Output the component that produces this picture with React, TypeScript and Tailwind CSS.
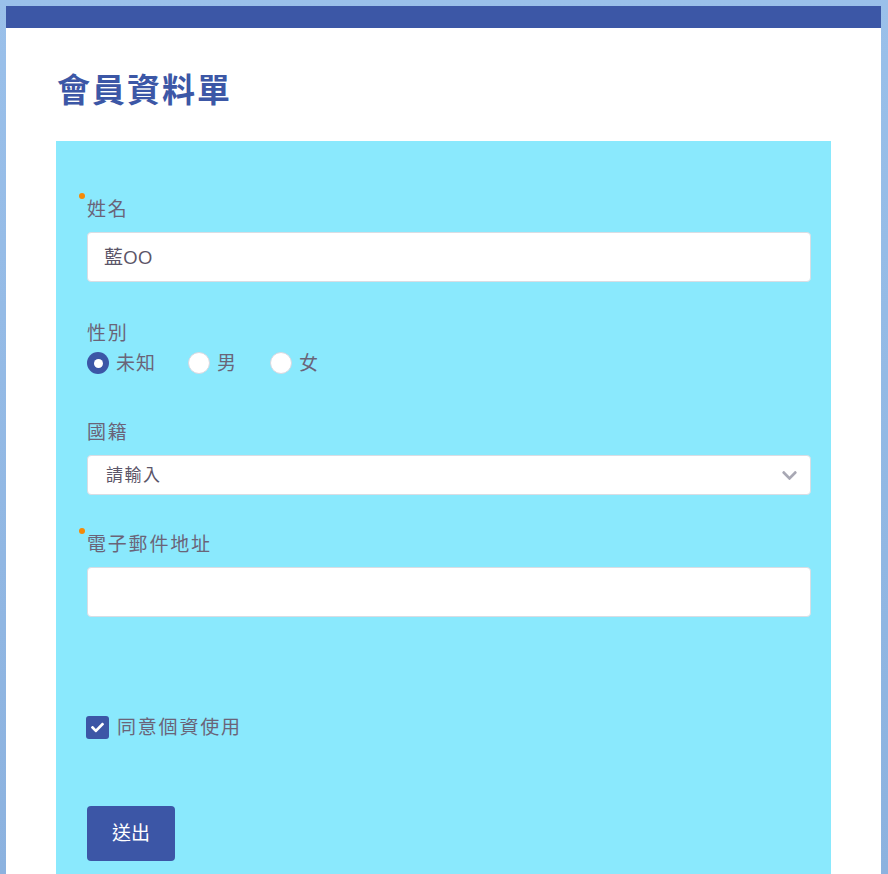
import { FaCheck, FaChevronDown } from "react-icons/fa";

/*============ MEMBER FORM ============*/
const font = "font-['Open_Sans','Noto_Sans_CJK_TC',sans-serif]";

function Label({ text, required }: { text: string; required?: boolean }) {
  return (
    <div className="relative pt-[1px] text-[19px] leading-[26px] tracking-[1.8px] text-[#6a6478]">
      {/* required dot */}
      {required && (
        <span className="absolute -left-[8px] -top-[2px] h-[6px] w-[6px] rounded-full bg-[#f58a07]" />
      )}
      {text}
    </div>
  );
}

function Radio({ label, checked }: { label: string; checked?: boolean }) {
  return (
    <label className="flex items-center gap-[7px]">
      {checked ? (
        <span className="grid h-[22px] w-[22px] place-content-center rounded-full bg-[#3c56a6]">
          <span className="h-[9px] w-[9px] rounded-full bg-white" />
        </span>
      ) : (
        <span className="h-[22px] w-[22px] rounded-full border border-[#d8d8e0] bg-white" />
      )}
      <span className="text-[19px] leading-[26px] tracking-[1px] text-[#6a6478]">{label}</span>
    </label>
  );
}

export default function App() {
  return (
    <div className={`min-h-screen bg-gradient-to-b from-[#9ac0ea] to-[#8cb2df] pl-[6px] pt-[6px] ${font}`}>
      <div className="min-h-[868px] w-[875px] bg-white">
        <div className="h-[22px] bg-[#3c57a6]" />
        <div className="px-[50px] pt-[38px]">
          <h1 className="pl-[1px] text-[33px] font-bold leading-[48px] tracking-[2px] text-[#3c57a6]">
            會員資料單
          </h1>

          {/*======== FORM PANEL ========*/}
          <div className="mt-[27px] min-h-[733px] w-[775px] bg-[#8ae9fd] pb-[12px] pl-[31px] pr-[20px] pt-[54px]">
            {/* name */}
            <Label text="姓名" required />
            <div className="mt-[10px] flex h-[50px] items-center rounded-[4px] border border-[#d9dde4] bg-white px-[16px] text-[19px] text-[#5b5568]">
              藍OO
            </div>

            {/* gender */}
            <div className="mt-[37px]">
              <Label text="性別" />
              <div className="mt-[4px] flex items-center gap-[33px]">
                <Radio label="未知" checked />
                <div className="-ml-[1px] flex items-center gap-[33px]">
                  <Radio label="男" />
                  <Radio label="女" />
                </div>
              </div>
            </div>

            {/* nationality */}
            <div className="mt-[42px]">
              <Label text="國籍" />
              <div className="mt-[10px] flex h-[40px] items-center justify-between rounded-[4px] border border-[#d9dde4] bg-white pl-[18px] pr-[12px]">
                <span className="text-[17px] tracking-[1.5px] text-[#5b5568]">請輸入</span>
                <FaChevronDown className="text-[17px] text-[#a8a8b4]" />
              </div>
            </div>

            {/* email */}
            <div className="mt-[35px]">
              <Label text="電子郵件地址" required />
              <div className="mt-[10px] h-[50px] rounded-[4px] border border-[#d9dde4] bg-white" />
            </div>

            {/* agree */}
            <label className="-ml-[1px] mt-[97px] flex items-center gap-[8px]">
              <span className="grid h-[23px] w-[23px] place-content-center rounded-[3px] bg-[#3c56a6]">
                <FaCheck className="text-[13px] text-white" />
              </span>
              <span className="text-[19px] leading-[26px] tracking-[1.8px] text-[#6a6478]">同意個資使用</span>
            </label>

            <button className="mt-[66px] h-[55px] w-[88px] rounded-[4px] bg-[#3c56a6] text-[19px] text-white">
              送出
            </button>
          </div>
        </div>
      </div>
    </div>
  );
}
